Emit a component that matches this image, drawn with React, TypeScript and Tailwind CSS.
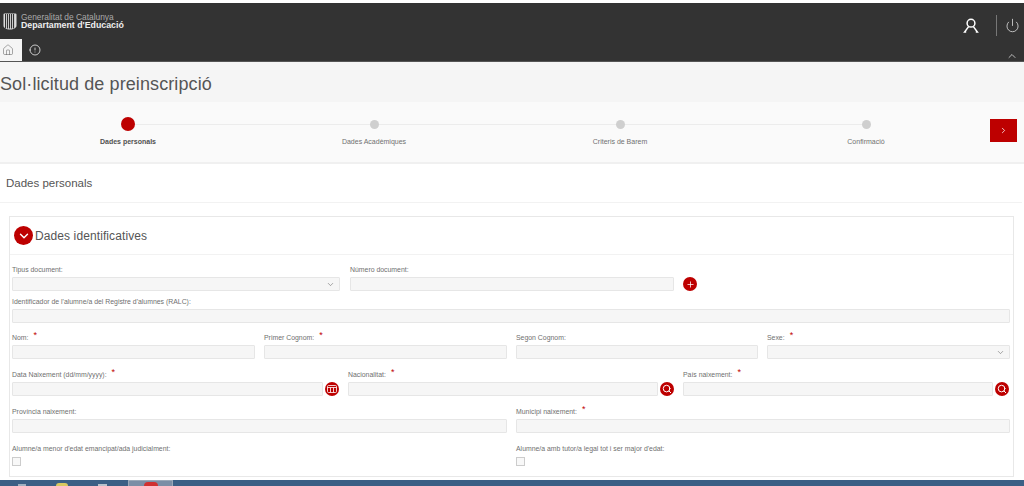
import { ChevronDown, ChevronRight, ChevronUp, House, Info, Plus, Power, Search } from "lucide-react";

const font = "font-['Liberation_Sans',Arial,sans-serif]";

function Label({ text, required }: { text: string; required?: boolean }) {
  return (
    <div className="flex h-[9px] items-center whitespace-nowrap text-[6.9px] leading-[9px] text-[#6f6f6f]">
      {text}
      {required && <span className="relative -top-[2px] ml-[5px] text-[9px] text-[#c00000]">*</span>}
    </div>
  );
}

function Input({ select, className }: { select?: boolean; className?: string }) {
  return (
    <div className={`flex h-[14px] items-center justify-end rounded-[1px] border border-[#e6e6e6] bg-[#f6f6f6] pr-[4px] ${className ?? ""}`}>
      {select && <ChevronDown size={9} strokeWidth={1.5} className="text-[#666]" />}
    </div>
  );
}

function RoundBtn({ children }: { children: React.ReactNode }) {
  return (
    <div className="flex h-[14px] w-[14px] shrink-0 items-center justify-center rounded-full bg-[#bd0000] text-white">
      {children}
    </div>
  );
}

function Field({ label, required, select, width, icon }: { label: string; required?: boolean; select?: boolean; width: string; icon?: React.ReactNode }) {
  return (
    <div className={`flex shrink-0 flex-col gap-[3px] ${width}`}>
      <Label text={label} required={required} />
      <div className="flex items-center gap-[2px]">
        <Input select={select} className="min-w-0 flex-1" />
        {icon && <RoundBtn>{icon}</RoundBtn>}
      </div>
    </div>
  );
}

function Step({ label, active, first, last }: { label: string; active?: boolean; first?: boolean; last?: boolean }) {
  return (
    <div className="flex w-[246px] flex-col items-center">
      <div className="flex h-[14px] w-full items-center">
        <div className={`h-px flex-1 ${first ? "" : "bg-[#ececec]"}`} />
        <div className={active ? "h-[14px] w-[14px] rounded-full bg-[#bd0000]" : "h-[9px] w-[9px] rounded-full bg-[#cfcfcf]"} />
        <div className={`h-px flex-1 ${last ? "" : "bg-[#ececec]"}`} />
      </div>
      <div className={`mt-[6px] text-[7px] leading-[9px] ${active ? "font-bold text-[#505050]" : "text-[#707070]"}`}>{label}</div>
    </div>
  );
}

function Shield() {
  return (
    <svg width="14" height="17" viewBox="0 0 14 17" className="shrink-0">
      <path d="M0.5 1.5a1 1 0 0 1 1-1h11a1 1 0 0 1 1 1v11c0 2.5-3 4-6.5 4s-6.5-1.5-6.5-4z" fill="#ddd" />
      {[2, 4, 6, 8, 10].map((x) => (
        <rect key={x} x={x} y="1" width="1.1" height="14.5" fill="#333" />
      ))}
    </svg>
  );
}

function UserGlyph() {
  return (
    <svg width="16" height="16" viewBox="0 0 16 16" fill="none" stroke="#fff" strokeWidth="1.5" className="mr-[17px]">
      <circle cx="8" cy="5.2" r="3.9" />
      <path d="M5.6 8.6 1.6 14h1.6M10.4 8.6l4 5.4h-1.6" />
    </svg>
  );
}

function CalendarGlyph() {
  return (
    <svg width="10" height="8" viewBox="0 0 10 8" fill="none" stroke="#fff" strokeWidth="0.8">
      <rect x="0.5" y="0.5" width="9" height="7" rx="1" />
      <path d="M0.5 2.5h9M3.5 2.5v5M6.5 2.5v5" />
    </svg>
  );
}

export default function App() {
  return (
    <div className={`${font} h-[486px] w-[1024px] overflow-hidden bg-white`}>
      <div className="h-[3px] bg-white" />
      {/* top bar */}
      <header className="h-[59px] border-b border-[#555] bg-[#333]">
        <div className="flex h-[36px] items-center justify-between pl-[3px]">
          <div className="flex items-center gap-[4px]">
            <Shield />
            <div className="text-[8.4px] leading-[8px]">
              <div className="text-[#aaa]">Generalitat de Catalunya</div>
              <div className="text-[8.8px] font-bold text-[#eee]">Departament d'Educació</div>
            </div>
          </div>
          <div className="flex items-center pr-[4px] pt-[9px]">
            <UserGlyph />
            <div className="h-[21px] w-px bg-[#777]" />
            <Power size={15} strokeWidth={1.3} className="ml-[8px] text-[#ddd]" />
          </div>
        </div>
        <div className="flex h-[22px] items-stretch justify-between">
          <div className="flex items-stretch">
            <div className="flex w-[22px] items-center bg-[#f5f5f5] pl-[2px]">
              <House size={12} strokeWidth={1} className="text-[#555]" />
            </div>
            <div className="ml-[7px] flex items-center">
              <Info size={12} strokeWidth={1.6} className="rotate-180 text-[#eee]" />
            </div>
          </div>
          <ChevronUp size={12} strokeWidth={1.6} className="mr-[6px] mt-[11px] text-[#ddd]" />
        </div>
      </header>

      {/* title */}
      <div className="flex h-[40px] items-center bg-[#f5f5f5] pt-[4px]">
        <h1 className="text-[18px] tracking-[0.1px] text-[#555]">Sol·licitud de preinscripció</h1>
      </div>

      {/* stepper */}
      <div className="flex h-[62px] items-start border-b-2 border-[#f0f0f0] bg-[#fafafa] pl-[5px] pt-[15px]">
        <Step label="Dades personals" active first />
        <Step label="Dades Acadèmiques" />
        <Step label="Criteris de Barem" />
        <Step label="Confirmació" last />
        <div className="ml-px mt-[2px] flex h-[23px] w-[27px] items-center justify-center bg-[#bd0000] text-white">
          <ChevronRight size={9} strokeWidth={2} />
        </div>
      </div>

      <main className="bg-white pr-[2px]">
        <div className="flex h-[39px] items-center border-b border-[#f2f2f2] pl-[6px] pt-[2px] text-[11.5px] text-[#555]">
          Dades personals
        </div>

        {/* panel */}
        <section className="ml-[9px] mt-[13px] h-[261px] w-[1005px] border border-[#e8e8e8]">
          <div className="flex h-[38px] items-center gap-[2px] border-b border-[#f2f2f2] pl-[4px]">
            <div className="flex h-[19px] w-[19px] items-center justify-center rounded-full bg-[#bd0000] text-white">
              <ChevronDown size={14} strokeWidth={2.4} />
            </div>
            <span className="text-[12px] tracking-[0.1px] text-[#555]">Dades identificatives</span>
          </div>

          <div className="px-[2px] pt-[10px]">
            <div className="flex items-end">
              <Field label="Tipus document:" select width="w-[328px]" />
              <Field label="Número document:" width="ml-[10px] w-[324px]" />
              <div className="ml-[9px]">
                <RoundBtn><Plus size={9} strokeWidth={2} /></RoundBtn>
              </div>
            </div>

            <div className="mt-[6px]">
              <Field label="Identificador de l'alumne/a del Registre d'alumnes (RALC):" width="w-[998px]" />
            </div>

            <div className="mt-[10px] flex gap-[9px]">
              <Field label="Nom:" required width="w-[243px]" />
              <Field label="Primer Cognom:" required width="w-[243px]" />
              <Field label="Segon Cognom:" width="w-[242px]" />
              <Field label="Sexe:" required select width="w-[243px]" />
            </div>

            <div className="mt-[11px] flex">
              <Field label="Data Naixement (dd/mm/yyyy):" required width="w-[327px]" icon={<CalendarGlyph />} />
              <Field label="Nacionalitat:" required width="ml-[9px] w-[326px]" icon={<Search size={10} strokeWidth={2.4} />} />
              <Field label="País naixement:" required width="ml-[9px] w-[326px]" icon={<Search size={10} strokeWidth={2.4} />} />
            </div>

            <div className="mt-[11px] flex gap-[9px]">
              <Field label="Província naixement:" width="w-[495px]" />
              <Field label="Municipi naixement:" required width="w-[494px]" />
            </div>

            <div className="mt-[11px] flex gap-[9px]">
              <div className="w-[495px]">
                <Label text="Alumne/a menor d'edat emancipat/ada judicialment:" />
                <div className="mt-[4px] h-[9px] w-[9px] border border-[#ccc] bg-[#f8f8f8]" />
              </div>
              <div className="w-[494px]">
                <Label text="Alumne/a amb tutor/a legal tot i ser major d'edat:" />
                <div className="mt-[4px] h-[9px] w-[9px] border border-[#ccc] bg-[#f8f8f8]" />
              </div>
            </div>
          </div>
        </section>
      </main>

      {/* windows taskbar, cut off by the crop */}
      <div className="mt-[3px] flex h-[6px] items-end overflow-hidden bg-[#3b5f85]">
        <div className="ml-[18px] h-[2px] w-[8px] bg-[#9fb0c0]" />
        <div className="ml-[30px] h-[3px] w-[12px] rounded-t-full bg-[#d8c860]" />
        <div className="ml-[30px] h-[2px] w-[9px] bg-[#b8c2cc]" />
        <div className="ml-[21px] flex h-[6px] w-[45px] items-end justify-center border border-b-0 border-[#9aa8b8] bg-[#7b8ea6]">
          <div className="h-[4px] w-[14px] rounded-t-full bg-[#d03030]" />
        </div>
      </div>
    </div>
  );
}
